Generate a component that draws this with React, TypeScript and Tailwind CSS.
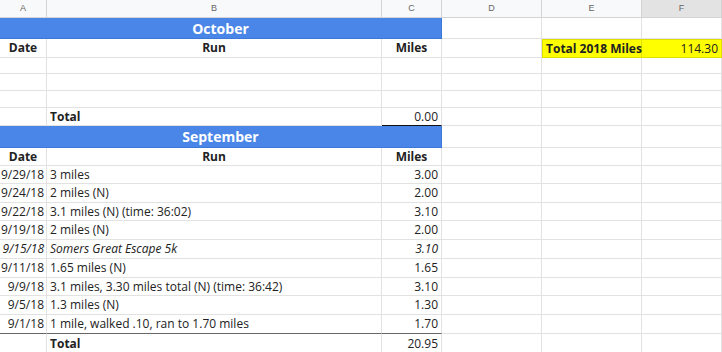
import React from "react";

type Run = { date: string; run: string; miles: string; italic?: boolean };

const september: Run[] = [
  { date: "9/29/18", run: "3 miles", miles: "3.00" },
  { date: "9/24/18", run: "2 miles (N)", miles: "2.00" },
  { date: "9/22/18", run: "3.1 miles (N) (time: 36:02)", miles: "3.10" },
  { date: "9/19/18", run: "2 miles (N)", miles: "2.00" },
  { date: "9/15/18", run: "Somers Great Escape 5k", miles: "3.10", italic: true },
  { date: "9/11/18", run: "1.65 miles (N)", miles: "1.65" },
  { date: "9/9/18", run: "3.1 miles, 3.30 miles total (N) (time: 36:42)", miles: "3.10" },
  { date: "9/5/18", run: "1.3 miles (N)", miles: "1.30" },
  { date: "9/1/18", run: "1 mile, walked .10, ran to 1.70 miles", miles: "1.70" },
];

const cell = "border-r border-b border-[#e2e2e2] flex items-center px-[3px] whitespace-nowrap overflow-hidden";

function Empty({ n }: { n: number }) {
  return (
    <>
      {Array.from({ length: n }).map((_, i) => (
        <div key={i} className={cell} />
      ))}
    </>
  );
}

function MonthBar({ name }: { name: string }) {
  return (
    <>
      <div className="col-span-3 bg-[#4a86e8] border-b border-r border-[#3c78d8] flex items-center justify-center text-white font-bold text-[14px]">
        {name}
      </div>
      <Empty n={3} />
    </>
  );
}

function HeadRow({ total }: { total?: boolean }) {
  return (
    <>
      <div className={`${cell} justify-center font-bold`}>Date</div>
      <div className={`${cell} justify-center font-bold`}>Run</div>
      <div className={`${cell} justify-center font-bold`}>Miles</div>
      <div className={cell} />
      {total ? (
        <>
          <div className="bg-[#ffff00] border border-[#e0e000] flex items-center px-[3px] font-bold whitespace-nowrap">
            Total 2018 Miles
          </div>
          <div className="bg-[#ffff00] border border-l-0 border-[#e0e000] flex items-center justify-end px-[3px]">
            114.30
          </div>
        </>
      ) : (
        <Empty n={2} />
      )}
    </>
  );
}

function TotalRow({ value, topDark }: { value: string; topDark?: boolean }) {
  const top = topDark ? "border-t border-t-[#555]" : "";
  return (
    <>
      <div className={`${cell} ${top}`} />
      <div className={`${cell} ${top} font-bold`}>Total</div>
      <div className={`${cell} ${top} justify-end border-b-[#111]`}>{value}</div>
      <Empty n={3} />
    </>
  );
}

export default function App() {
  return (
    <div
      className="w-[722px] h-[352px] overflow-hidden bg-white text-[12px] text-[#222]"
      style={{ fontFamily: '"Open Sans", "Noto Sans", sans-serif' }}
    >
      <div className="grid grid-cols-[47px_335px_60px_100px_100px_80px] grid-rows-[18px_21px_19px_16px_17px_17px_18px_22px_18px_18px_19px_18px_19px_19px_19px_18px_19px_19px_20px]">
        {["A", "B", "C", "D", "E", "F"].map((l) => (
          <div
            key={l}
            className={`flex items-center justify-center border-r border-b border-[#d4d4d4] text-[9px] text-[#666] ${
              l === "F" ? "bg-[#e3e3e3]" : "bg-[#f8f9fa]"
            }`}
            style={{ fontFamily: '"Liberation Sans", Arial, sans-serif' }}
          >
            {l}
          </div>
        ))}

        <MonthBar name="October" />
        <HeadRow total />
        <Empty n={6} />
        <Empty n={6} />
        <Empty n={6} />
        <TotalRow value="0.00" />

        <MonthBar name="September" />
        <HeadRow />
        {september.map((r, i) => {
          const last = i === september.length - 1;
          const bottom = last ? "border-b-[#666]" : "";
          const it = r.italic ? "italic" : "";
          return (
            <React.Fragment key={r.date}>
              <div className={`border-r border-b border-[#e2e2e2] flex items-center justify-end pr-[2px] whitespace-nowrap ${bottom} ${it}`}>
                {r.date}
              </div>
              <div className={`${cell} ${bottom} ${it}`}>{r.run}</div>
              <div className={`${cell} ${bottom} ${it} justify-end`}>{r.miles}</div>
              <Empty n={3} />
            </React.Fragment>
          );
        })}
        <TotalRow value="20.95" />
      </div>
    </div>
  );
}
